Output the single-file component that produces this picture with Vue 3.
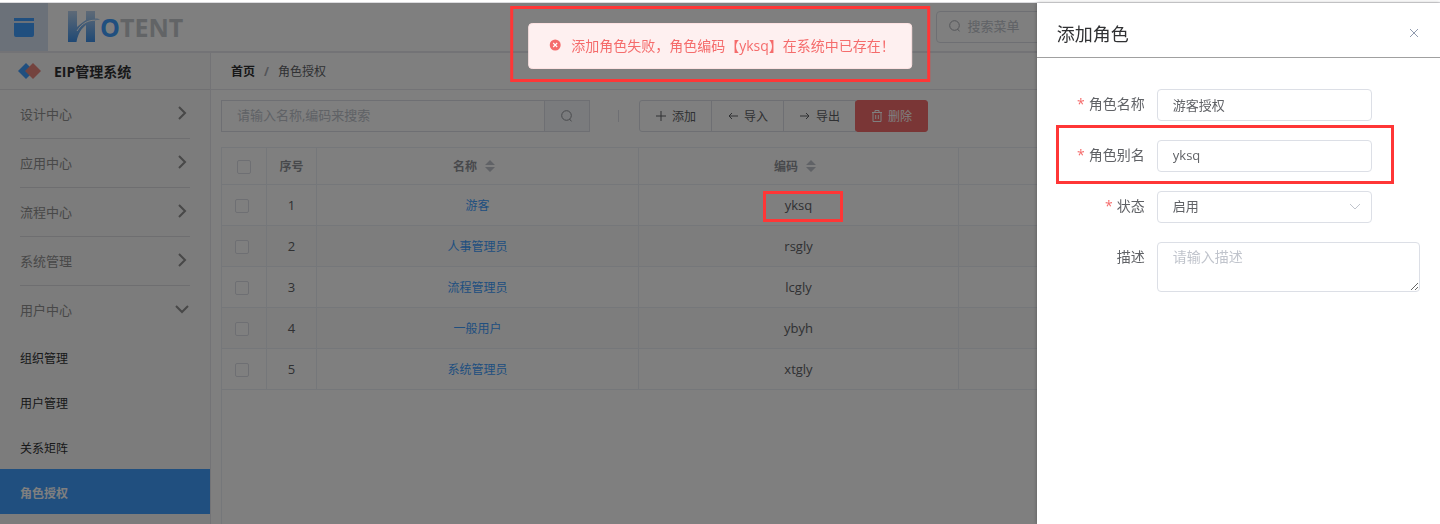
<template>
  <div class="page">
    <div class="page__strip"></div>

    <header class="header">
      <button class="header__toggle" type="button" aria-label="菜单">
        <svg width="20" height="19" viewBox="0 0 20 19">
          <path d="M0 0h20v3H0zM0 5h20v12a2 2 0 0 1-2 2H2a2 2 0 0 1-2-2z" fill="#409eff" />
        </svg>
      </button>
      <a class="logo" href="#" aria-label="HOTENT">
        <svg class="logo__mark" width="32" height="32" viewBox="0 0 32 32">
          <defs>
            <linearGradient id="mark" gradientUnits="userSpaceOnUse" x1="0" y1="0" x2="0" y2="31">
              <stop offset="0" stop-color="#bcd4ee" />
              <stop offset="1" stop-color="#3f92ea" />
            </linearGradient>
          </defs>
          <path d="M0 0h9v16C12 13 15 11 18 9V0h9v7.500C29 7.300 30 7.500 32 8.500C30 8.800 28 9.300 27 9.800V31H18V14C14 17 10 22 8.500 31H0z" fill="url(#mark)" />
          <path d="M9 20C14 12 21 8 31 9.500" fill="none" stroke="#fff" stroke-width="1" />
        </svg>
        <span class="logo__o">O</span><span class="logo__rest">TENT</span>
      </a>
      <label class="header__search">
        <svg class="icon" width="12" height="12" viewBox="0 0 12 12">
          <circle cx="5.5" cy="5.5" r="4.8" />
          <path d="M8.500 9l2 2.400" />
        </svg>
        <input class="header__input" type="text" placeholder="搜索菜单" aria-label="搜索菜单" />
      </label>
    </header>

    <div class="body">
      <aside class="sidebar">
        <div class="sidebar__brand">
          <svg width="24" height="16" viewBox="0 0 24 16">
            <path d="M8 0l8 8-8 8-8-8z" fill="#409eff" />
            <path d="M15 0l8 8-8 8-8-8z" fill="#e8867c" />
          </svg>
          <span>EIP管理系统</span>
        </div>
        <nav class="menu">
          <button
            v-for="item in menu"
            :key="item.title"
            class="menu__item"
            type="button"
            @click="item.open = !item.open"
          >
            {{ item.title }}
            <svg class="menu__arrow" :class="{ 'menu__arrow--open': item.open }" width="14" height="14" viewBox="0 0 14 14">
              <path d="M4 1l6 6-6 6" />
            </svg>
          </button>
          <a
            v-for="link in links"
            :key="link"
            class="menu__link"
            :class="{ 'menu__link--active': link === activeLink }"
            href="#"
            @click.prevent="activeLink = link"
            >{{ link }}</a
          >
        </nav>
      </aside>

      <main class="content">
        <div class="breadcrumb">
          <a class="breadcrumb__home" href="#">首页</a>
          <span class="breadcrumb__slash">/</span>
          <span>角色授权</span>
        </div>

        <div class="toolbar">
          <div class="search">
            <input
              class="search__input"
              v-model="query"
              type="text"
              placeholder="请输入名称,编码来搜索"
              aria-label="请输入名称,编码来搜索"
            />
            <button class="search__button" type="button" aria-label="搜索">
              <svg class="icon" width="12" height="12" viewBox="0 0 12 12">
                <circle cx="5.5" cy="5.5" r="4.8" />
                <path d="M8.500 9l2 2.400" />
              </svg>
            </button>
          </div>
          <span class="toolbar__divider"></span>
          <div class="actions">
            <button class="button" type="button">
              <svg class="icon" width="12" height="12" viewBox="0 0 12 12"><path d="M1 6h10M6 1v10" /></svg>
              添加
            </button>
            <button class="button" type="button">
              <svg class="icon" width="12" height="12" viewBox="0 0 12 12"><path d="M11 6H2M5 3L2 6l3 3" /></svg>
              导入
            </button>
            <button class="button" type="button">
              <svg class="icon" width="12" height="12" viewBox="0 0 12 12"><path d="M1 6h9M7 3l3 3-3 3" /></svg>
              导出
            </button>
            <button class="button button--danger" type="button">
              <svg class="icon" width="12" height="12" viewBox="0 0 12 12">
                <path d="M1 2.500h10M4 2.500v-2h4v2M2 2.500v9h8v-9M4.700 5v4M7.300 5v4" />
              </svg>
              删除
            </button>
          </div>
        </div>

        <div class="table-wrap">
          <table class="table">
            <colgroup>
              <col class="col--check" />
              <col class="col--index" />
              <col class="col--name" />
              <col class="col--code" />
              <col />
            </colgroup>
            <thead>
              <tr>
                <th><input class="checkbox checkbox--all" type="checkbox" aria-label="全选" /></th>
                <th>序号</th>
                <th v-for="title in ['名称', '编码']" :key="title">
                  <span class="sort">
                    {{ title }}
                    <svg width="10" height="12" viewBox="0 0 10 12">
                      <path d="M5 0l5 5H0zM0 7h10l-5 5z" fill="#c0c4cc" />
                    </svg>
                  </span>
                </th>
                <th></th>
              </tr>
            </thead>
            <tbody>
              <tr v-for="(role, i) in roles" :key="role.code">
                <td><input class="checkbox" type="checkbox" :aria-label="role.name" /></td>
                <td>{{ i + 1 }}</td>
                <td><a class="table__link" href="#">{{ role.name }}</a></td>
                <td class="table__code">
                  {{ role.code }}
                  <span v-if="role.code === form.alias" class="mark mark--code"></span>
                </td>
                <td></td>
              </tr>
            </tbody>
          </table>
        </div>
      </main>
    </div>

    <div class="mask"></div>

    <section class="drawer" role="dialog" aria-labelledby="drawerTitle">
      <div class="drawer__header">
        <h2 class="drawer__title" id="drawerTitle">添加角色</h2>
        <button class="drawer__close" type="button" aria-label="关闭">
          <svg width="10" height="10" viewBox="0 0 10 10"><path d="M1 1l8 8M9 1L1 9" /></svg>
        </button>
      </div>
      <form class="form" @submit.prevent>
        <div class="form__row">
          <label class="form__label form__label--required" for="roleName">角色名称</label>
          <input class="form__control" id="roleName" v-model="form.name" type="text" required />
        </div>
        <div class="form__row">
          <label class="form__label form__label--required" for="roleAlias">角色别名</label>
          <input class="form__control" id="roleAlias" v-model="form.alias" type="text" required />
          <span class="mark mark--field"></span>
        </div>
        <div class="form__row">
          <label class="form__label form__label--required" for="roleStatus">状态</label>
          <div class="select">
            <select class="form__control" id="roleStatus" v-model="form.status">
              <option>启用</option>
              <option>禁用</option>
            </select>
            <svg class="select__arrow" width="12" height="8" viewBox="0 0 12 8"><path d="M1 1l5 5 5-5" /></svg>
          </div>
        </div>
        <div class="form__row">
          <label class="form__label" for="roleDesc">描述</label>
          <textarea
            class="form__control form__control--area"
            id="roleDesc"
            v-model="form.desc"
            placeholder="请输入描述"
          ></textarea>
        </div>
      </form>
    </section>

    <div class="notice">
      <div class="message" role="alert">
        <svg width="12" height="12" viewBox="0 0 12 12">
          <circle cx="6" cy="6" r="5.5" fill="#f56c6c" />
          <path d="M4 4l4 4M8 4L4 8" stroke="#fff" stroke-width="1.1" />
        </svg>
        <span>添加角色失败，角色编码【yksq】在系统中已存在！</span>
      </div>
    </div>
  </div>
</template>

<script setup>
import { reactive, ref } from "vue";

const menu = reactive([
  { title: "设计中心", open: false },
  { title: "应用中心", open: false },
  { title: "流程中心", open: false },
  { title: "系统管理", open: false },
  { title: "用户中心", open: true },
]);

const links = ["组织管理", "用户管理", "关系矩阵", "角色授权"];
const activeLink = ref("角色授权");

const query = ref("");

const roles = [
  { name: "游客", code: "yksq" },
  { name: "人事管理员", code: "rsgly" },
  { name: "流程管理员", code: "lcgly" },
  { name: "一般用户", code: "ybyh" },
  { name: "系统管理员", code: "xtgly" },
];

const form = reactive({
  name: "游客授权",
  alias: "yksq",
  status: "启用",
  desc: "",
});
</script>

<style>
body {
  margin: 0;
  overflow: hidden;
}
</style>

<style scoped>
.page {
  display: flex;
  flex-direction: column;
  height: 100vh;

  background-color: #fff;
  color: #606266;
  font-family: "Open Sans", "Noto Sans CJK SC", sans-serif;
  font-size: 12px;
}
.page *,
.page *::before {
  box-sizing: border-box;
}
button,
input,
select,
textarea {
  margin: 0;
  padding: 0;
  border: none;
  background: none;
  color: inherit;
  font-family: inherit;
  font-size: inherit;
  outline: none;
}
button {
  cursor: pointer;
}
a {
  color: inherit;
  text-decoration: none;
}
svg {
  flex-shrink: 0;
}
input::placeholder,
textarea::placeholder {
  color: #c0c4cc;
}
.icon {
  fill: none;
  stroke: currentColor;
  stroke-width: 1;
}
.page__strip {
  flex-shrink: 0;
  height: 3px;
  border-bottom: 1px solid #dcdcdf;
}

.header {
  display: flex;
  flex-shrink: 0;
  align-items: center;
  height: 50px;
  border-bottom: 2px solid #e6e6ec;
}
.header__toggle {
  display: flex;
  align-items: center;
  justify-content: center;
  width: 48px;
  height: 48px;
  background-color: #d6e3f2;
}
.logo {
  display: flex;
  align-items: center;
  margin-left: 20px;

  font-size: 25px;
  font-weight: 700;
  line-height: 32px;
}
.logo__o {
  color: #409eff;
}
.logo__rest {
  color: #c4c8cc;
}
.header__search {
  display: flex;
  align-items: center;
  gap: 6px;
  width: 34%;
  height: 32px;
  margin-left: auto;
  margin-right: 14px;
  padding: 0 12px 2px;

  border: 1px solid #dcdfe6;
  border-radius: 4px;
  color: #a8abb2;
}
.header__input {
  flex: 1;
  font-size: 13px;
}

.body {
  display: flex;
  flex: 1;
  min-height: 0;
}
.sidebar {
  flex-shrink: 0;
  width: 211px;
  background-color: #f8f8f8;
  border-right: 1px solid #e6e6ec;
}
.sidebar__brand {
  display: flex;
  align-items: center;
  gap: 12px;
  height: 37px;
  padding-left: 18px;

  border-bottom: 1px solid #e0e0e4;
  color: #303133;
  font-size: 14px;
  font-weight: 700;
}
.menu {
  display: flex;
  flex-direction: column;
}
.menu__item {
  display: flex;
  align-items: center;
  justify-content: space-between;
  height: 49px;
  margin: 0 20px;
  padding: 0 1px 2px 0;

  border-bottom: 1px solid #dddde0;
  color: #909090;
  font-size: 13px;
}
.menu__item:last-of-type {
  height: 48px;
  border-bottom: none;
}
.menu__arrow {
  fill: none;
  stroke: #909090;
  stroke-width: 2;
}
.menu__arrow--open {
  transform: rotate(90deg);
}
.menu__link {
  display: flex;
  align-items: center;
  height: 45px;
  padding: 2px 20px 0;
  color: #303133;
}
.menu__link--active {
  background-color: #409eff;
  color: #fff;
  font-weight: 700;
}

.content {
  display: flex;
  flex: 1;
  flex-direction: column;
  min-width: 0;
}
.breadcrumb {
  display: flex;
  align-items: center;
  gap: 9px;
  flex-shrink: 0;
  height: 37px;
  padding: 0 20px;
  border-bottom: 1px solid #e6e6ec;
}
.breadcrumb__home {
  color: #303133;
  font-weight: 700;
}
.breadcrumb__slash {
  color: #a8abb2;
  font-weight: 700;
}
.toolbar {
  display: flex;
  align-items: center;
  padding: 10px 10px 15px;
}
.search {
  display: flex;
  width: 369px;
  height: 32px;
  border: 1px solid #dcdfe6;
}
.search__input {
  flex: 1;
  min-width: 0;
  padding: 0 15px 2px;
  font-size: 13px;
}
.search__button {
  display: flex;
  align-items: center;
  justify-content: center;
  width: 45px;
  background-color: #f5f7fa;
  border-left: 1px solid #dcdfe6;
  color: #909399;
}
.toolbar__divider {
  width: 1px;
  height: 12px;
  margin: 0 20px 0 28px;
  background-color: #dcdfe6;
}
.actions {
  display: flex;
}
.button {
  display: flex;
  align-items: center;
  justify-content: center;
  gap: 5px;
  width: 73px;
  height: 32px;
  margin-right: -1px;

  background-color: #fff;
  border: 1px solid #dcdfe6;
}
.button:first-child {
  border-radius: 3px 0 0 3px;
}
.button--danger {
  background-color: #f56c6c;
  border-color: #f56c6c;
  border-radius: 3px;
  color: #fff;
}

.table-wrap {
  flex: 1;
  margin: 0 10px;
  border: 1px solid #ebeef5;
  border-bottom: none;
}
.table {
  width: 100%;
  table-layout: fixed;
  border-collapse: separate;
  border-spacing: 0;
  text-align: center;
}
.col--check {
  width: 45px;
}
.col--index {
  width: 50px;
}
.col--name {
  width: 322px;
}
.col--code {
  width: 320px;
}
.table th,
.table td {
  height: 41px;
  padding: 0;
  border-right: 1px solid #ebeef5;
  border-bottom: 1px solid #ebeef5;
}
.table th {
  height: 37px;
  color: #909399;
  font-weight: 700;
}
.table td {
  font-size: 13px;
}
.table tbody tr:nth-child(even) {
  background-color: #fafafa;
}
.table__link {
  color: #409eff;
  font-size: 12px;
}
.table__code {
  position: relative;
}
.sort {
  display: inline-flex;
  align-items: center;
  gap: 8px;
  padding-right: 7px;
}
.checkbox {
  display: block;
  width: 14px;
  height: 14px;
  margin: 1px auto 0 13px;

  appearance: none;
  background-color: #fff;
  border: 1px solid #dcdfe6;
  border-radius: 2px;
}
.checkbox--all {
  margin-left: 15px;
}

.mask {
  position: fixed;
  inset: 3px 0 0;
  background-color: rgba(0, 0, 0, 0.5);
}

/* red outlines that point at the duplicated code */
.mark {
  position: absolute;
  z-index: 10;
  border: 3px solid #ff3636;
  pointer-events: none;
}
.mark--code {
  inset: 6px 115px 3px 124px;
}
.mark--field {
  inset: -15px 26px -12px -1px;
}

.drawer {
  position: fixed;
  top: 3px;
  right: 0;
  bottom: 0;
  width: 28%;
  background-color: #fff;
  box-shadow: 0 0 4px rgba(0, 0, 0, 0.3);
}
.drawer__header {
  display: flex;
  align-items: center;
  justify-content: space-between;
  height: 55px;
  padding: 6px 20px 0;
  border-bottom: 1px solid #a0a0a0;
}
.drawer__title {
  margin: 0;
  color: #303133;
  font-size: 18px;
  font-weight: 400;
}
.drawer__close {
  display: flex;
  padding: 1px;
}
.drawer__close path {
  fill: none;
  stroke: #909aae;
}
.form {
  display: flex;
  flex-direction: column;
  gap: 19px;
  padding: 31px 20px;
}
.form__row {
  position: relative;
  display: flex;
  align-items: flex-start;
  gap: 12px;
}
.form__label {
  flex-shrink: 0;
  width: 88px;
  font-size: 14px;
  line-height: 30px;
  text-align: right;
}
.form__label--required::before {
  content: "*";
  margin-right: 4px;
  color: #f56c6c;
}
.form__control {
  width: 215px;
  height: 32px;
  padding: 0 15px 2px;

  background-color: #fff;
  border: 1px solid #dcdfe6;
  border-radius: 4px;
  font-size: 13px;
}
.form__control--area {
  flex: 1;
  min-width: 0;
  height: 50px;
  padding: 4px 15px;
  font-size: 14px;
  line-height: 20px;
  resize: vertical;
}
.select {
  position: relative;
}
.select .form__control {
  display: block;
  appearance: none;
}
.select__arrow {
  position: absolute;
  top: 12px;
  right: 11px;
  fill: none;
  stroke: #c0c4cc;
  pointer-events: none;
}

.notice {
  position: fixed;
  top: 6px;
  left: 50%;
  transform: translateX(-50%);
  padding: 14px 15px 10px;
  border: 3px solid #ff3636;
}
.message {
  display: flex;
  align-items: center;
  gap: 10px;
  height: 46px;
  padding: 0 16px 2px 20px;

  background-color: #fef0f0;
  border: 1px solid #fde2e2;
  border-radius: 4px;
  color: #f56c6c;
  font-size: 14px;
  white-space: nowrap;
}
</style>
